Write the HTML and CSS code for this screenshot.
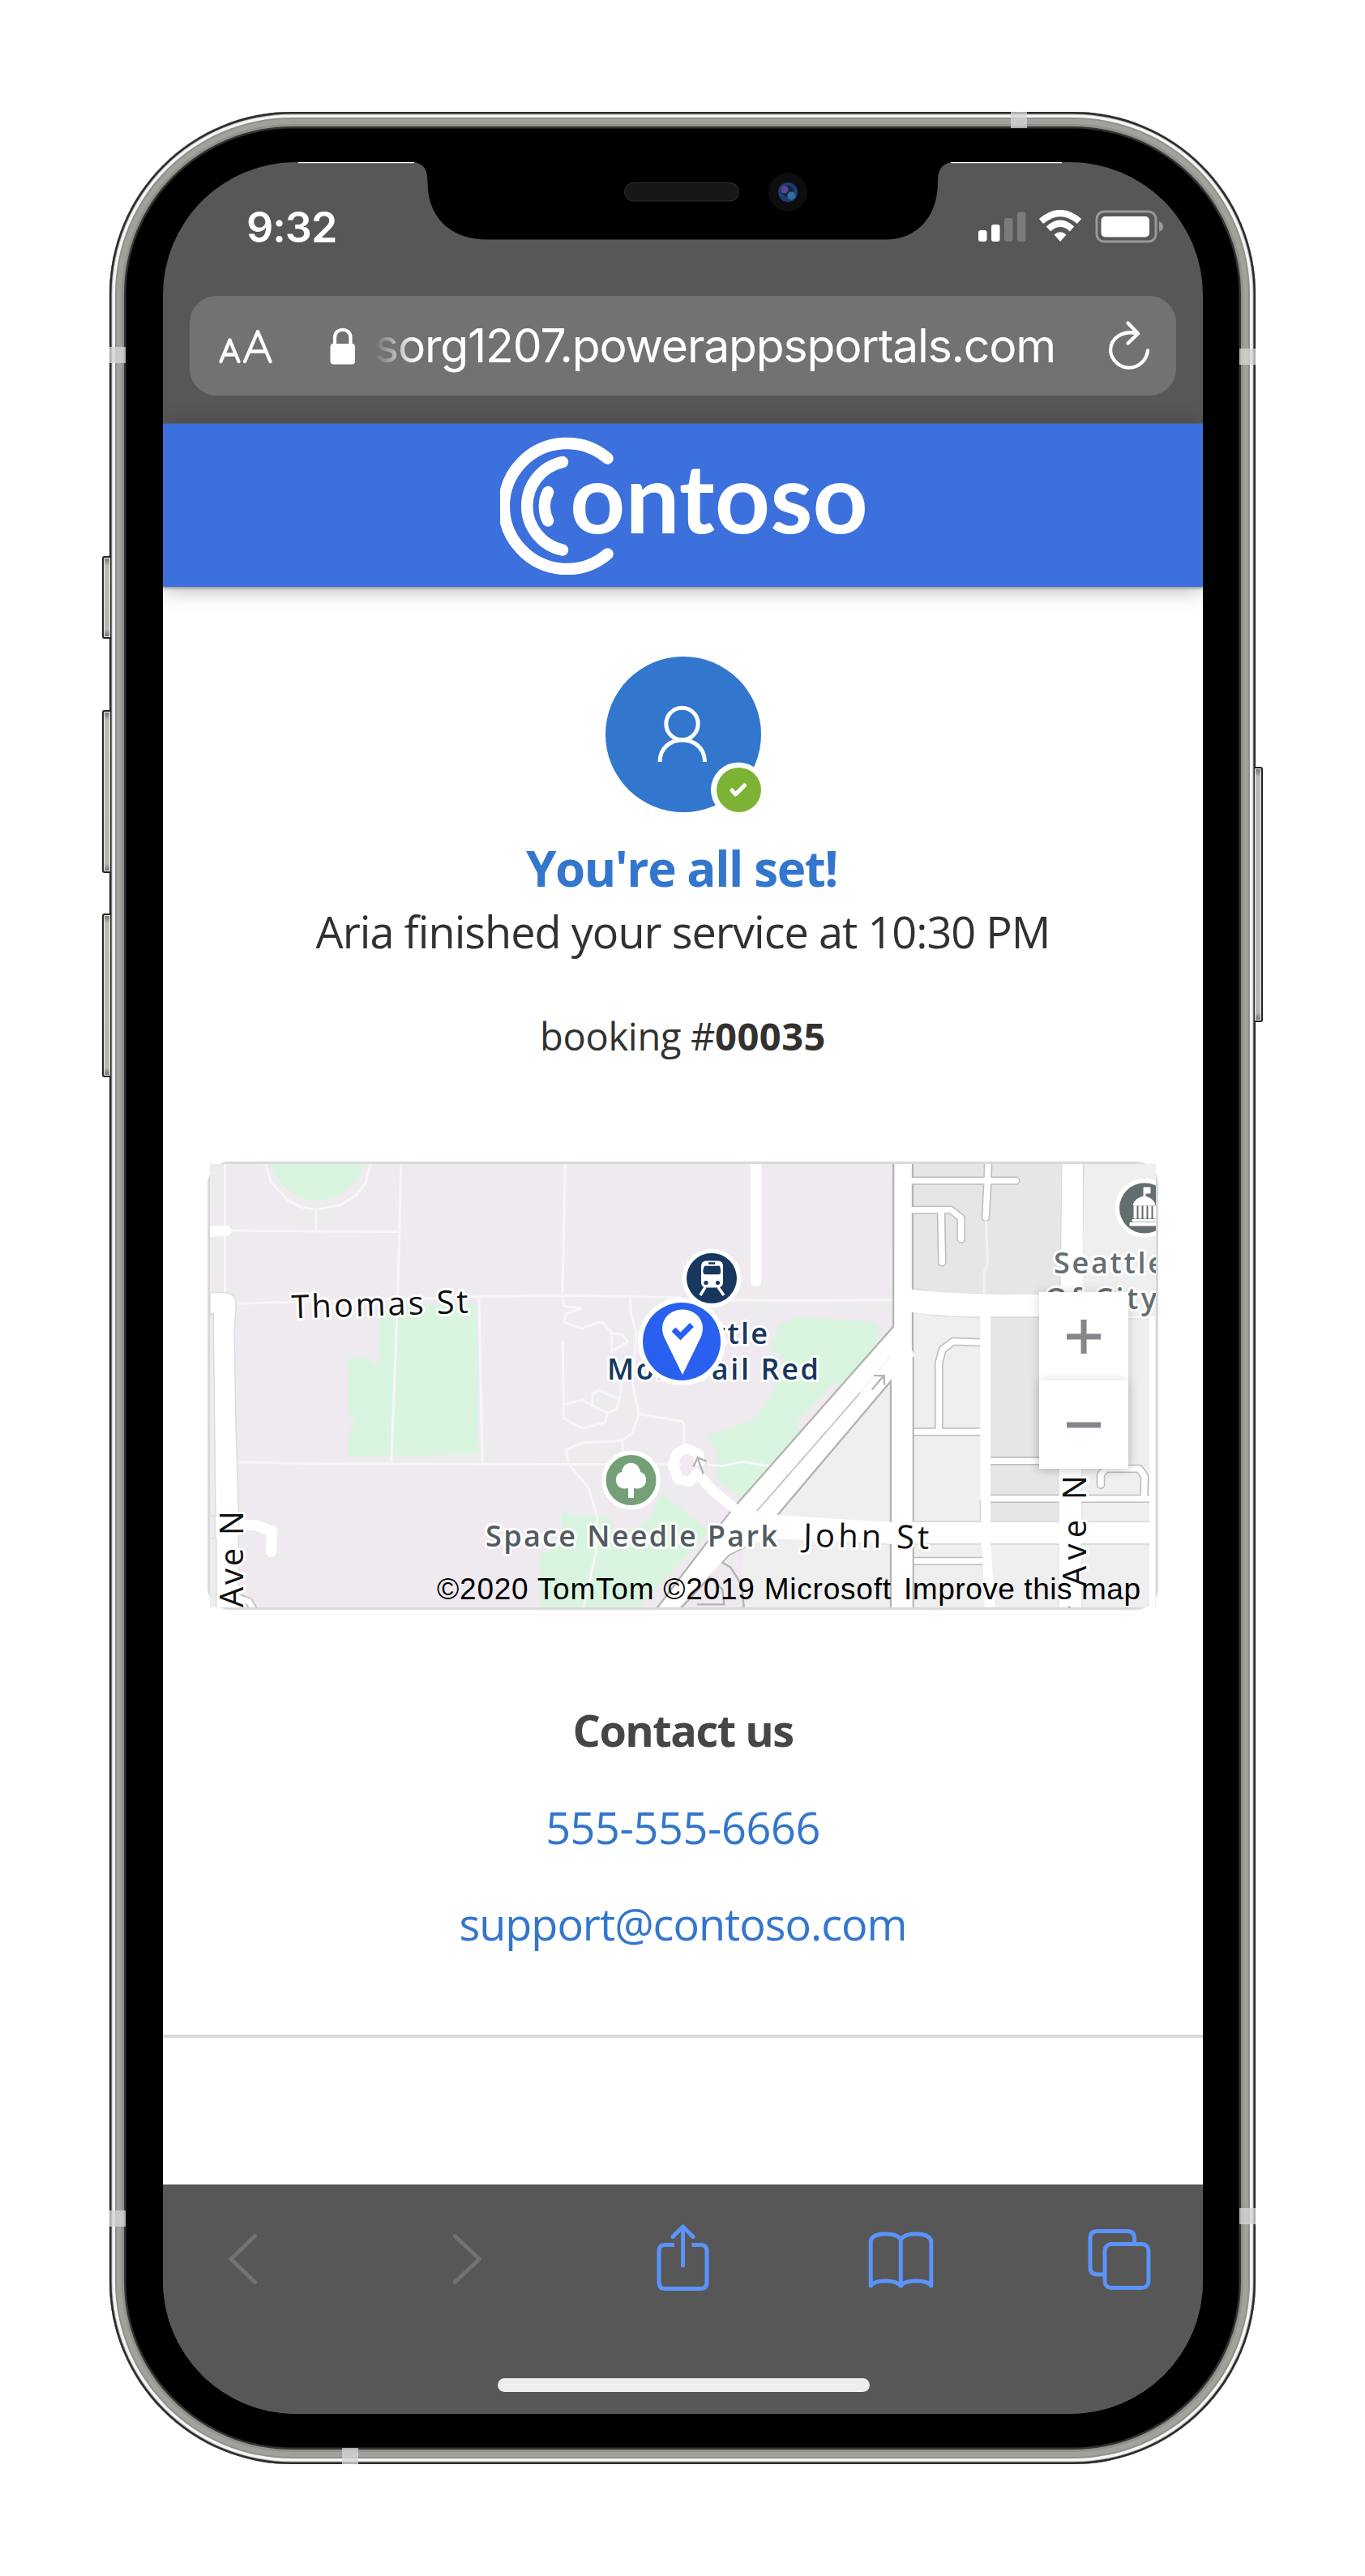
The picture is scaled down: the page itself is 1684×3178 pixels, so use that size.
FILE: index.html
```html
<!DOCTYPE html>
<html lang="en">
<head>
<meta charset="utf-8">
<title>Contoso</title>
<link rel="stylesheet" href="styles.css">
</head>
<body>
<div class="phone">
  <i class="key key-mute"></i><i class="key key-up"></i><i class="key key-down"></i><i class="key key-power"></i>
  <i class="band band-l1"></i><i class="band band-l2"></i><i class="band band-r1"></i><i class="band band-r2"></i><i class="band band-t"></i><i class="band band-b"></i>

  <div class="screen">
    <svg class="notch" viewBox="201 200 1283 100" width="1283" height="100" aria-hidden="true">
      <path d="M368 200.5H511M1173 200.5H1310" stroke="#fff" stroke-width="1.6"/>
      <path d="M505 199C522 201 527.5 207 527.5 225C527.5 270 558 295.5 600 295.5H1094C1128 295.5 1157 270 1157 225C1157 207 1163 201 1180 199Z" fill="#000"/>
      <rect x="770.5" y="225.500" width="141" height="22.500" rx="11" fill="#171717" stroke="#303030"/>
      <circle cx="972" cy="237" r="24" fill="#0d0d0f"/>
      <circle cx="972" cy="237" r="12" fill="#1d3c6e"/>
      <circle cx="972" cy="236" r="7" fill="#14233f"/>
      <circle cx="968" cy="234" r="4.500" fill="#5a4690"/>
      <circle cx="976.500" cy="241.500" r="5" fill="#2f7299"/>
    </svg>

    <div class="statusbar">
      <span class="time">9:32</span>
      <svg class="indicators" viewBox="1207 259 229 41" width="229" height="41" aria-hidden="true">
        <g fill="#fff"><rect x="1207" y="284" width="10.500" height="14" rx="3"/><rect x="1223" y="277" width="10.500" height="21" rx="3"/></g>
        <g fill="#7b7b7b"><rect x="1239" y="269" width="10.500" height="29" rx="3"/><rect x="1255" y="261.500" width="10.500" height="36.500" rx="3"/></g>
        <path d="M1308 298L1300.500 289.500Q1308 283 1315.500 289.500Z" fill="#fff"/>
        <path d="M1293.500 282.500Q1308 269 1322.500 282.500M1284.500 273Q1308 253 1331.500 273" fill="none" stroke="#fff" stroke-width="8"/>
        <rect x="1353" y="261" width="73" height="37" rx="9" fill="none" stroke="#999" stroke-width="3"/>
        <rect x="1358.500" y="267" width="59.500" height="25.500" rx="5" fill="#fff"/>
        <path d="M1430 273Q1435 275 1435 279.500T1430 286Z" fill="#999"/>
      </svg>
    </div>

    <div class="urlbar">
      <svg class="text-size" viewBox="268 400 70 54" width="70" height="54" aria-hidden="true">
        <path d="M272.500 446L283.500 419.500L294.500 446M276 437.500H291M302 446L318 409L333.500 446M307.500 433.500H328" fill="none" stroke="#fff" stroke-width="4.300" stroke-linecap="round" stroke-linejoin="round"/>
      </svg>
      <svg class="lock" viewBox="406 403 34 46" width="34" height="46" aria-hidden="true">
        <rect x="407.500" y="423" width="30.500" height="25.500" rx="4" fill="#fff"/>
        <path d="M413 425V415.500C413 402.500 432.500 402.500 432.500 415.500V425" fill="none" stroke="#fff" stroke-width="4.200"/>
      </svg>
      <span class="address">sorg1207.powerappsportals.com</span>
      <svg class="reload" viewBox="1364 394 58 66" width="58" height="66" aria-hidden="true">
        <path d="M1404 411.500C1386 407 1370 416 1370 433A23.200 24 0 0 0 1416 432.500M1391.500 398.500L1404 411.500L1391.500 423.500" fill="none" stroke="#fff" stroke-width="4.300" stroke-linecap="round" stroke-linejoin="round"/>
      </svg>
    </div>

    <header class="header">
      <svg class="logo" viewBox="617 538 452 170" width="452" height="170" role="img" aria-label="Contoso">
        <g fill="none" stroke="#fff" stroke-width="14.500" stroke-linecap="round">
          <path d="M749.500 564.500A77.500 77.500 0 1 0 749.500 682.500"/>
          <path d="M694 569A55.500 55.500 0 0 0 694 677.500"/>
          <path d="M676 606A40 40 0 0 0 676 641.500"/>
        </g>
        <text x="703" y="657" textLength="368" lengthAdjust="spacingAndGlyphs" class="wordmark">ontoso</text>
      </svg>
    </header>

    <main class="content">
      <svg class="avatar" viewBox="747 810 194 194" width="194" height="194" aria-hidden="true">
        <circle cx="843" cy="906" r="96" fill="#3376cd"/>
        <g fill="none" stroke="#fff" stroke-width="5"><circle cx="841.500" cy="893" r="19.700"/><path d="M814 940C814 904 869.500 904 869.500 940"/></g>
        <circle cx="911" cy="974.500" r="34" fill="#fff"/><circle cx="911.500" cy="974.500" r="27.500" fill="#7cb335"/>
        <path d="M903 975L907.500 980L918.500 969" fill="none" stroke="#fff" stroke-width="5" stroke-linecap="round" stroke-linejoin="round"/>
      </svg>
      <h1 class="title">You're all set!</h1>
      <p class="subtitle">Aria finished your service at 10:30 PM</p>
      <p class="booking">booking #<b>00035</b></p>

      <div class="map">
        <svg class="map-canvas" viewBox="259 1436 1167 547" width="1167" height="547">
          <rect x="259" y="1436" width="1167" height="547" fill="#eeeaef"/>

          <!-- west half: campus and paths -->
          <g transform="translate(240 1410) scale(.3827)">
            <path d="M238 60Q290 184 395 184T556 60Z" fill="#d9f5df"/>
            <path d="M595 525L910 520L917 1003L498 1012V918H516V888H498V722H490V694H572V710H595Z" fill="#d9f5df"/>
            <path d="M1183 1193L1340 1207L1350 1250L1410 1248Q1472 1215 1480 1180L1505 1130L1660 1250L1560 1360L1428 1500H1115V1330L1183 1290Z" fill="#d9f5df"/>
            <g fill="none" stroke="#f8f5f8" stroke-width="8">
              <path d="M98 60V490M228 66L246 126L300 184L345 208L395 215L470 200L522 168L552 128L567 66M392 215V284M110 283L662 286M666 66L655 500L634 1036M132 518L420 510L920 496L1187 491L1570 499M917 496L928 1034M1195 66L1186 490L1191 526L1250 533L1200 550L1190 578L1248 598L1313 576L1345 612V680M1345 614L1380 618L1396 642L1345 672M1187 642L1190 888L1251 920L1322 902L1332 872L1250 829L1190 843M1332 872L1358 860L1371 826L1303 797L1284 808L1280 850M1371 826L1377 770L1372 700M1404 495L1408 560L1425 612L1412 780L1432 870L1430 885L1410 935L1380 960L1250 967L1198 988L1206 1035L1270 1112L1298 1205L1296 1310L1254 1500M1380 960V1030M1432 874L1568 897M130 1029L400 1034L1570 1037"/>
            </g>
            <path d="M50 286L102 283M150 1232H195L250 1252L247 1318" fill="none" stroke="#fff" stroke-width="34" stroke-linecap="round" stroke-linejoin="round"/>
            <path d="M50 482H95Q134 484 134 520L128 620L134 930L142 1200V1500H68L66 1200L60 550H50Z" fill="#fff" stroke="#d9dedc" stroke-width="4"/>
            <path d="M48 550H60L68 1202H48ZM48 1275H70V1500H48Z" fill="#ededed" stroke="#d9dedc" stroke-width="4"/>
            <path d="M146 1466L175 1478L192 1506" fill="none" stroke="#bbb" stroke-width="26"/><path d="M140 1466L175 1478L194 1510" fill="none" stroke="#fff" stroke-width="18"/>
          </g>

          <!-- east half: street grid -->
          <g transform="translate(840 1410) scale(.3954 .3827)">
            <path d="M370 561L613 577L622 640L500 790L480 772L360 902L375 925L300 1040L188 1142L114 1088L110 990L78 944L222 896C270 840 290 810 300 770C350 720 320 690 275 662L308 586Z" fill="#d9f5df"/>
            <path d="M478 772L360 902L378 930L500 790Z" fill="#eeeaef"/>
            <path d="M0 895L10 908V980M85 1038L130 1041L190 1028L290 1043M110 506L370 508L662 506" fill="none" stroke="#f8f5f8" stroke-width="8"/>
            <path d="M234 50V446" stroke="#fff" stroke-width="34" stroke-linecap="round" fill="none"/>

            <path d="M725 60H1190V490L800 486L725 470ZM966 560H1182V1222H966Z" fill="#e6e6e6"/>
            <path d="M1256 60H1490V560H1250ZM725 545L935 560V1222H725ZM1250 565H1462V1222H1250ZM725 1293H1180V1500H725ZM1250 1293H1462V1500H1250ZM655 770V1222L300 1200ZM190 1310L235 1275L655 1293V1500H195Z" fill="#efefef"/>
            <path d="M1190 60L1183 490L800 486L725 468M725 543L800 556L935 562M966 562H1180V1222H966M1256 60L1250 490M1250 565H1462M1250 565V1222H1462M1180 1293V1500M966 1293H1180M1250 1500V1293H1462M300 1200L655 1221M235 1270L655 1293M725 1221H935M725 1293H940" fill="none" stroke="#d5dbd9" stroke-width="5"/>

            <path d="M720 122H1045M959 60L957 122L951 240M720 216H843L874 242V310M812 220L815 385M935 643L850 640L816 666L805 710V925M725 931H935M966 1025H1182M966 1147H1462M1310 1102V1070L1325 1050H1430L1447 1075L1445 1147M725 1348H945" fill="none" stroke="#bdbdbd" stroke-width="27" stroke-linecap="round" stroke-linejoin="round"/>
            <path d="M663 60V592L170 1170L150 1195L-75 1500M723 60V475M723 545V1500M655 770V1222M655 1293V1500M655 770L303 1198M205 1300L150 1328L128 1352L155 1368L190 1425L197 1500M0 1500L90 1400L130 1440L135 1488H50" fill="none" stroke="#b3b3b3" stroke-width="6"/>
            <path d="M720 122H1045M959 60L957 122L951 240M720 216H843L874 242V310M812 220L815 385M935 643L850 640L816 666L805 710V925M725 931H935M966 1025H1182M966 1147H1462M1310 1102V1070L1325 1050H1430L1447 1075L1445 1147M725 1348H945" fill="none" stroke="#fff" stroke-width="19" stroke-linecap="round" stroke-linejoin="round"/>
            <path d="M667 60H720V472Q840 490 1185 488L1190 60H1254V560H1480V1500H1462V565H1250V1500H1180V560H966V1290L980 1500H948L940 1310L934 1290V560Q800 560 720 545V665L726 680V1500H658V1293L270 1275L205 1300L150 1326L128 1350L-10 1500H-70L152 1196L176 1168L666 594Z" fill="#fff"/>
            <path d="M725 690V1221M725 1293V1500" fill="none" stroke="#b3b3b3" stroke-width="5"/>
            <path d="M655 768V1222L303 1200Z" fill="#efefef"/>
            <path d="M725 1221H934V1150M725 1293H938M966 1221H1180M966 1293H1180M1250 1221H1462M1250 1293H1462" fill="none" stroke="#d5dbd9" stroke-width="4"/>
            <path d="M655 1222V768L303 1198" fill="none" stroke="#b3b3b3" stroke-width="6"/>
            <path d="M658 1223H1462V1291H658Z" fill="#fff"/>
            <path d="M952 250L957 390L947 415V490" fill="none" stroke="#f2f2f2" stroke-width="8"/>
            <path d="M237 1187L560 805" stroke="#bdbdbd" stroke-width="4"/><path d="M560 805L655 685" stroke="#f0f0f0" stroke-width="3"/>
            <path d="M596 796L633 750M602 750H634L635 780" fill="none" stroke="#b3b3b3" stroke-width="6"/>
            <path d="M175 1185L100 1120L50 1065L28 1092L-8 1085L-25 1040L-12 1000L18 985L55 1002L58 1040" fill="none" stroke="#fff" stroke-width="32" stroke-linejoin="round"/>
            <path d="M70 1068L52 1015L39 1044M52 1015L80 1026" fill="none" stroke="#b3b3b3" stroke-width="6"/>
          </g>

          <!-- points of interest -->
          <circle cx="778.500" cy="1826" r="36.500" fill="#fff"/><circle cx="778.500" cy="1826" r="31" fill="#75a077"/>
          <path d="M775 1848V1836C757 1840 756 1818 767 1816C769 1801 788 1801 790 1816C801 1818 800 1840 782 1836V1848Z" fill="#fff"/>
          <circle cx="878" cy="1577" r="36.500" fill="#fff"/><circle cx="878" cy="1577" r="31" fill="#17375e"/>
          <rect x="865" y="1555.500" width="27" height="33" rx="6" fill="#fff"/><path d="M870 1588L864 1598M886 1588L893 1598" stroke="#fff" stroke-width="3.500"/>
          <path d="M874 1558.500H882M870 1563H887Q889 1570 887 1571H870Q867 1570 870 1563Z" fill="#17375e" stroke="#17375e" stroke-width="2.500"/><circle cx="871" cy="1582.500" r="2.600" fill="#17375e"/><circle cx="885.500" cy="1582.500" r="2.600" fill="#17375e"/>
          <circle cx="1412" cy="1490.500" r="36.500" fill="#fff"/><circle cx="1412" cy="1490.500" r="31" fill="#646d70"/>
          <path d="M1411 1476V1465H1419V1472H1413V1476Q1424 1479 1425 1487H1398Q1399 1479 1411 1476ZM1399 1488H1402V1503H1399ZM1405 1488H1408V1503H1405ZM1411 1488H1414V1503H1411ZM1417 1488H1420V1503H1417ZM1423 1488H1426V1503H1423ZM1397 1504.500H1426V1507H1397ZM1394 1508.500H1426V1512H1394Z" fill="#fff" stroke="#fff"/>

          <g class="labels">
            <text class="street" transform="rotate(-1.800 360 1625)" x="360" y="1626.500" textLength="218">Thomas St</text>
            <text class="street" transform="rotate(1 992 1907)" x="991" y="1908" textLength="155">John St</text>
            <text class="street" transform="translate(300 1983) rotate(-90)" textLength="119">Ave N</text>
            <text class="street" transform="translate(1340 1998) rotate(-90)" textLength="178">r Ave N</text>
            <text class="poi park" x="599" y="1907.500" textLength="360">Space Needle Park</text>
            <text class="poi transit" x="813" y="1657.500" textLength="134">Seattle</text>
            <text class="poi transit" x="749" y="1702" textLength="261">Monorail Red</text>
            <text class="poi civic" x="1300" y="1571" textLength="137">Seattle</text>
            <text class="poi civic" x="1289" y="1615" textLength="138">Of City</text>
          </g>
          <text class="credit" x="539" y="1972.500" textLength="560">©2020 TomTom ©2019 Microsoft</text>
          <text class="credit" x="1115" y="1972.500" textLength="292">Improve this map</text>

          <circle cx="841" cy="1655" r="54" fill="#fff"/><circle cx="841" cy="1655" r="48" fill="#2a60ef"/>
          <path d="M842 1696L820 1651C811 1632 824 1615.500 842 1615.500S873 1632 864 1651Z" fill="#fff"/>
          <path d="M831 1640L839.500 1648.500L853.500 1634.500" fill="none" stroke="#2a60ef" stroke-width="7"/>
        </svg>
        <div class="zoom">
          <button class="zoom-btn" aria-label="Zoom in"><svg viewBox="0 0 42 42" width="42" height="42"><path d="M0 21H42M21 0V42" stroke="#84888d" stroke-width="7"/></svg></button>
          <button class="zoom-btn" aria-label="Zoom out"><svg viewBox="0 0 42 42" width="42" height="42"><path d="M0 21H42" stroke="#84888d" stroke-width="7"/></svg></button>
        </div>
      </div>

      <h2 class="contact">Contact us</h2>
      <a class="link phone-no">555-555-6666</a>
      <a class="link email">support@contoso.com</a>
      <hr class="rule">
    </main>

    <nav class="toolbar">
      <div class="tools">
        <svg class="off" viewBox="260.500 2736 80 100"><path d="M315 2758.500L285.500 2787L315 2815.500"/></svg>
        <svg class="off" viewBox="530.250 2736 80 100"><path d="M561.500 2758.500L591.500 2787L561.500 2815.500"/></svg>
        <svg viewBox="800.500 2736 80 100"><path stroke-linecap="butt" d="M831.500 2769.500H820Q812.500 2769.500 812.500 2777V2816Q812.500 2823.500 820 2823.500H864Q871.500 2823.500 871.500 2816V2777Q871.500 2769.500 864 2769.500H853"/><path d="M842 2795V2747.500M829.500 2759.500L842 2747L854.500 2759.500"/></svg>
        <svg viewBox="1070.750 2736 80 100"><path d="M1111 2763Q1107 2756 1092 2756T1074 2764V2820Q1078 2814 1092 2814T1111 2820Q1115 2814 1130 2814T1148.500 2820V2764Q1145 2756 1130 2756T1111 2763V2820"/></svg>
        <svg viewBox="1341 2736 80 100"><path stroke-linecap="butt" d="M1361 2806H1354Q1345 2806 1345 2797V2761Q1345 2752.500 1354 2752.500H1390Q1399.500 2752.500 1399.500 2761V2768"/><rect x="1363" y="2768.500" width="54" height="54" rx="8"/></svg>
      </div>
      <div class="home"></div>
    </nav>
  </div>
</div>
</body>
</html>
```
FILE: styles.css
```css
* { box-sizing: border-box; }

body {
  margin: 0;
  padding: 138px 0 0 135px;
  height: 3178px;
  background: #fff;
  font-family: "Open Sans", "Noto Sans", sans-serif;
}

/* device shell */
.phone {
  position: relative;
  width: 1414px;
  height: 2902px;
  padding: 62px 65px 62px 66px;
  border-radius: 225px;
  background: #000;
  box-shadow:
    inset 0 0 0 2.500px #2b2b2b,
    inset 0 0 0 3.500px #a9aaa8,
    inset 0 0 0 7px #f5f5f3,
    inset 0 0 0 9px #8f928c,
    inset 0 0 0 15px #9fa39b,
    inset 0 0 0 18px #90938c,
    inset 0 0 0 20.500px #333432;
}

.key {
  position: absolute;
  width: 10px;
  border: 2px solid #222;
  background: linear-gradient(#6f726c, #b9bdb4 10px, #b5b9b0 calc(100% - 10px), #6f726c);
  box-shadow: inset 0 0 0 1px #eee;
}
.key-mute, .key-up, .key-down { left: -9px; border-right: 0; border-radius: 3px 0 0 3px; }
.key-mute { top: 548px; height: 102px; }
.key-up { top: 738px; height: 201px; }
.key-down { top: 989px; height: 202px; }
.key-power { right: -9px; top: 808px; height: 315px; border-left: 0; border-radius: 0 3px 3px 0; }

.band { position: absolute; background: rgba(212, 214, 211, .78); }
.band-l1, .band-l2 { left: 0; width: 20px; height: 20px; }
.band-r1, .band-r2 { right: 0; width: 20px; height: 20px; }
.band-l1 { top: 290px; }
.band-l2 { top: 2589px; }
.band-r1 { top: 292px; }
.band-r2 { top: 2586px; }
.band-t { top: 0; left: 1112px; width: 20px; height: 20px; }
.band-b { bottom: 0; left: 287px; width: 20px; height: 20px; }

.screen {
  position: relative;
  display: flex;
  flex-direction: column;
  height: 2778px;
  border-radius: 164px;
  overflow: hidden;
  background: #575757;
}
.notch { position: absolute; top: 0; left: 0; }

/* browser chrome */
.statusbar {
  display: flex;
  justify-content: space-between;
  align-items: flex-start;
  height: 165px;
  padding: 50px 48px 0 103px;
}
.time {
  font: 600 52px/62px Inter, sans-serif;
  letter-spacing: -1px;
  color: #fff;
}
.indicators { margin-top: 9px; }

.urlbar {
  display: flex;
  align-items: center;
  height: 123px;
  margin: 0 33px 34px;
  padding: 0 29px 0 34px;
  border-radius: 33px;
  background: #727272;
}
.lock { margin: 0 22px 0 68px; }
.address {
  flex: 1;
  font: 400 57px/70px Inter, sans-serif;
  letter-spacing: -1.160px;
  color: #fff;
  white-space: nowrap;
  -webkit-mask-image: linear-gradient(90deg, transparent 0, #000 52px);
  mask-image: linear-gradient(90deg, transparent 0, #000 52px);
}

/* page */
.header {
  display: flex;
  justify-content: center;
  align-items: center;
  height: 202px;
  background: #3c70dd;
  border-top: 1px solid #4a5f8e;
  box-shadow: 0 2px 3px #9c9c9c, 0 4px 24px rgba(0, 0, 0, .28);
  z-index: 1;
}
.wordmark { font: 700 119px Lato, sans-serif; fill: #fff; }

.content {
  flex: 1;
  display: flex;
  flex-direction: column;
  align-items: center;
  padding-top: 86px;
  background: #fff;
}
.title, .subtitle, .booking, .contact { margin: 0; white-space: nowrap; }
.avatar { margin: 0 0 -2px 2px; }
.title {
  margin: 30px 3px 0 0;
  font-size: 60px;
  line-height: 79px;
  letter-spacing: -1.400px;
  color: #3376cd;
}
.subtitle {
  font-size: 54px;
  line-height: 76px;
  letter-spacing: -.960px;
  color: #323130;
}
.booking {
  margin-top: 61px;
  font-size: 47px;
  line-height: 60px;
  letter-spacing: -.300px;
  color: #323130;
}
.booking b { letter-spacing: .500px; }
.contact {
  margin-top: 110px;
  font-size: 54px;
  line-height: 76px;
  letter-spacing: -1.500px;
  color: #484644;
}
.link {
  font-size: 54px;
  line-height: 76px;
  color: #3376cd;
}
.phone-no { margin-top: 44px; letter-spacing: -.400px; }
.email { margin-top: 43px; letter-spacing: -1px; }
.rule {
  align-self: stretch;
  height: 4px;
  margin: 99px 0 0;
  border: 0;
  background: #d9d9d9;
}

/* map card */
.map {
  position: relative;
  width: 1173px;
  height: 553px;
  margin-top: 125px;
  border: 3px solid #d9d9d9;
  border-radius: 28px;
}
.map-canvas { display: block; }
.street, .poi { paint-order: stroke; stroke: #fff; stroke-linejoin: round; }
.street { font-size: 40px; stroke-width: 6px; fill: #111; }
.poi { font-size: 36px; font-weight: 600; stroke-width: 6px; }
.park { fill: #525c61; }
.transit { fill: #17375e; }
.civic { fill: #666f73; }
.credit { font: 37px "Liberation Sans", Arial, sans-serif; fill: #000; }

.zoom {
  position: absolute;
  top: 158px;
  right: 34px;
  box-shadow: 0 0 12px rgba(0, 0, 0, .16);
}
.zoom-btn {
  display: flex;
  align-items: center;
  justify-content: center;
  width: 110px;
  height: 109px;
  padding: 0;
  border: 0;
  background: #fff;
}
.zoom-btn + .zoom-btn { box-shadow: 0 0 12px rgba(0, 0, 0, .14); }

/* bottom toolbar */
.toolbar {
  height: 283px;
  padding: 41px 63px 0 59px;
  background: #575757;
}
.tools { display: flex; justify-content: space-between; }
.tools svg {
  width: 80px;
  height: 100px;
  overflow: visible;
  fill: none;
  stroke: #5b93fb;
  stroke-width: 5;
  stroke-linecap: round;
  stroke-linejoin: round;
}
.tools .off { stroke: #727272; }
.home {
  width: 459px;
  height: 17px;
  margin: 98px 0 0 354px;
  border-radius: 9px;
  background: #eee;
}
```
